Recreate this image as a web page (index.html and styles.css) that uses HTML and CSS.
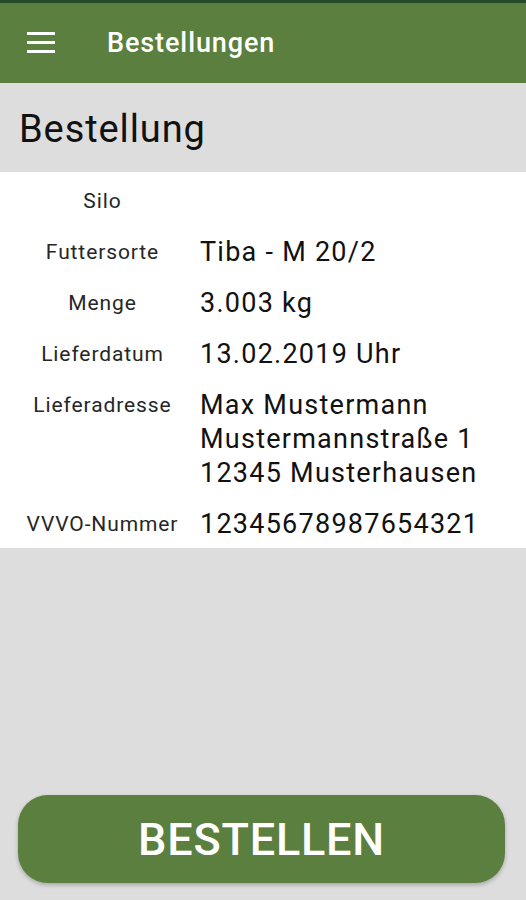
FILE: index.html
```html
<!DOCTYPE html>
<html lang="de">
<head>
<meta charset="utf-8">
<link rel="stylesheet" href="styles.css">
</head>
<body>
<div class="screen">
  <div class="statusbar"></div>
  <header class="toolbar">
    <svg class="menu" width="28" height="22" viewBox="0 0 28 22">
      <rect x="0" y="0" width="28" height="3" fill="#fff"/>
      <rect x="0" y="9" width="28" height="3" fill="#fff"/>
      <rect x="0" y="18" width="28" height="3" fill="#fff"/>
    </svg>
    <span class="toolbar-title">Bestellungen</span>
  </header>
  <div class="heading">Bestellung</div>
  <section class="details">
    <div class="row"><div class="label">Silo</div><div class="value"></div></div>
    <div class="row"><div class="label">Futtersorte</div><div class="value">Tiba - M 20/2</div></div>
    <div class="row"><div class="label">Menge</div><div class="value">3.003 kg</div></div>
    <div class="row"><div class="label">Lieferdatum</div><div class="value">13.02.2019 Uhr</div></div>
    <div class="row"><div class="label">Lieferadresse</div><div class="value">Max Mustermann<br>Mustermannstraße 1<br>12345 Musterhausen</div></div>
    <div class="row"><div class="label">VVVO-Nummer</div><div class="value">12345678987654321</div></div>
  </section>
  <div class="spacer"></div>
  <div class="footer">
    <button class="order">BESTELLEN</button>
  </div>
</div>
</body>
</html>
```
FILE: styles.css
```css
* { box-sizing: border-box; }
html, body { margin: 0; padding: 0; }
body {
  font-family: Roboto, "Noto Sans", sans-serif;
  background: #dddddd;
}
.screen {
  width: 526px;
  height: 900px;
  display: flex;
  flex-direction: column;
  background: #dddddd;
}
.statusbar {
  height: 3px;
  background: #234b2a;
}
.toolbar {
  height: 80px;
  background: #5b7f3e;
  display: flex;
  align-items: center;
  padding-left: 27px;
}
.menu { display: block; }
.toolbar-title {
  color: #fff;
  font-size: 27px;
  font-weight: 500;
  letter-spacing: 0.9px;
  margin-left: 52px;
}
.heading {
  height: 89px;
  display: flex;
  align-items: center;
  padding-left: 19px;
  padding-top: 2px;
  font-size: 38px;
  letter-spacing: 0.9px;
  color: #111;
}
.details {
  background: #fff;
  padding-top: 3px;
  height: 376px;
}
.row {
  display: flex;
  padding: 9px 0 8px;
}
.label {
  width: 205px;
  text-align: center;
  font-size: 21px;
  letter-spacing: 0.9px;
  line-height: 34px;
  color: #262626;
  flex: none;
}
.value {
  font-size: 27px;
  letter-spacing: 1.25px;
  line-height: 34px;
  color: #111;
  margin-left: -5px;
  min-height: 34px;
}
.spacer { flex: 1; }
.footer {
  padding: 0 21px 17px 18px;
}
.order {
  display: block;
  width: 100%;
  height: 88px;
  border: none;
  border-radius: 30px;
  background: #5b7f3e;
  color: #fff;
  font-family: Roboto, sans-serif;
  font-weight: 500;
  font-size: 45px;
  letter-spacing: 0.8px;
  box-shadow: 0 2px 4px rgba(0,0,0,0.25);
  padding: 0;
}
```
